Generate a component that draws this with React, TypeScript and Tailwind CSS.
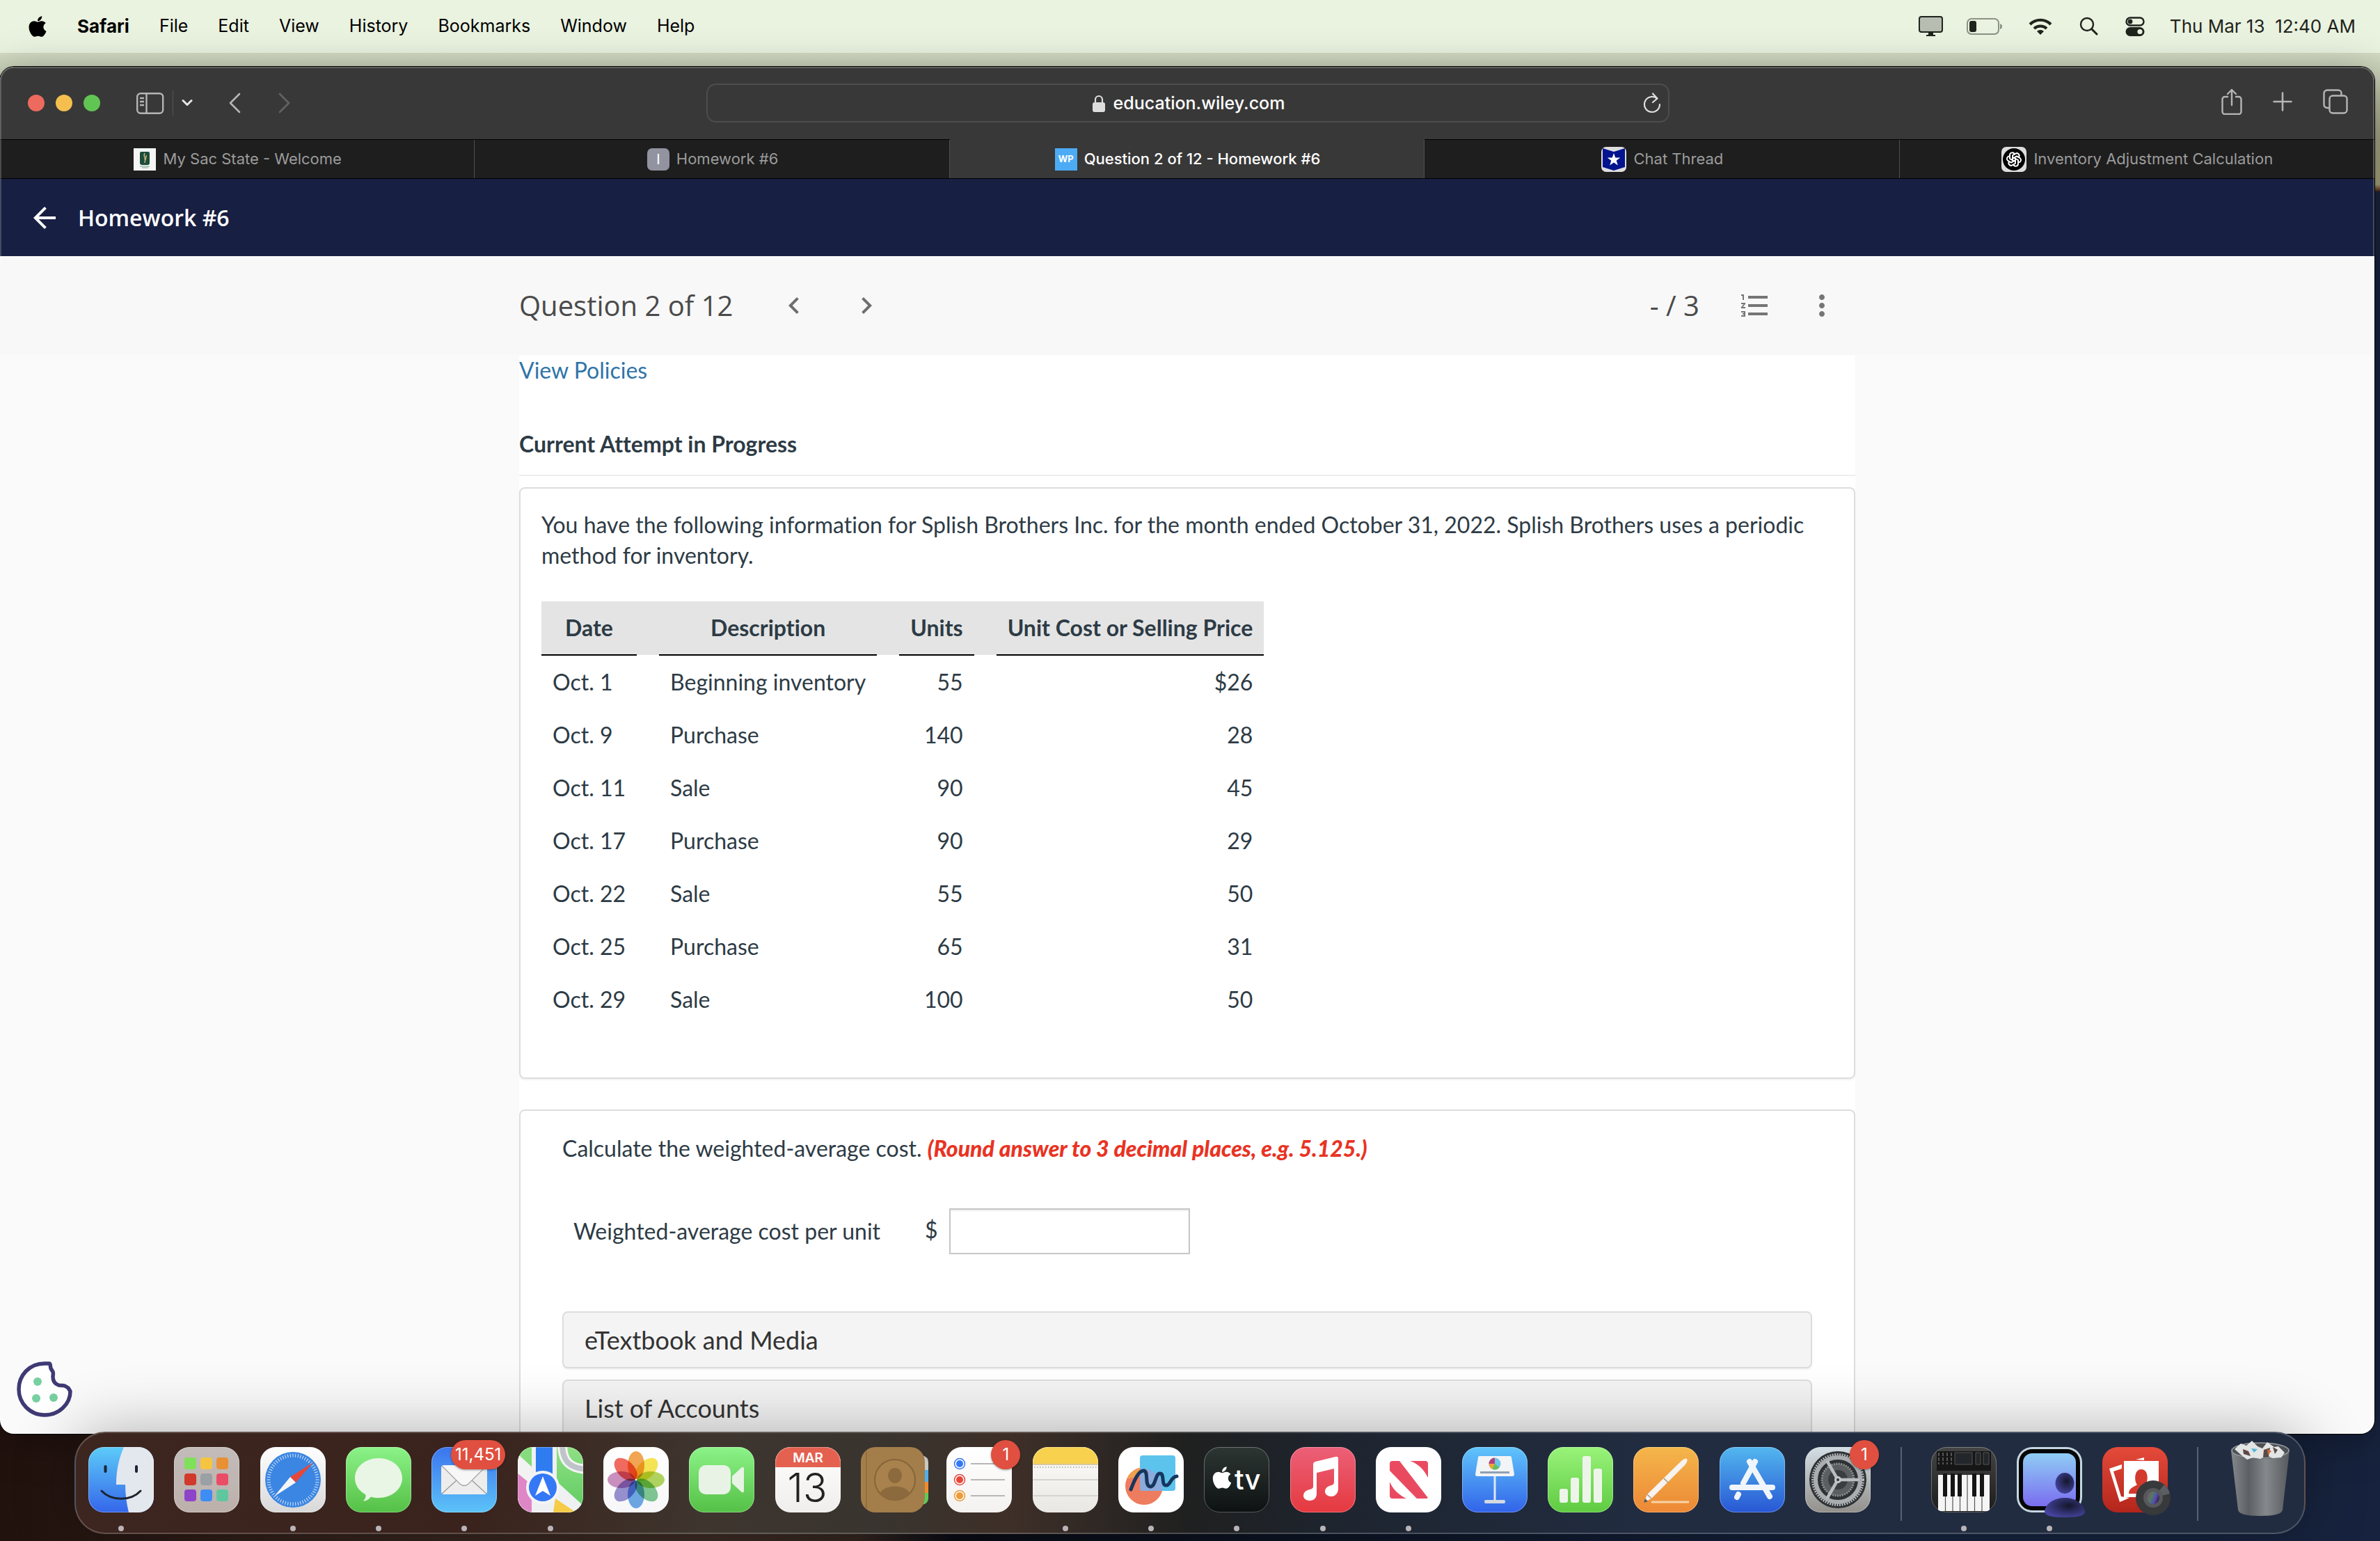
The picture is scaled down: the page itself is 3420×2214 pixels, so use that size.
import { useState } from "react";
import type { ReactNode } from "react";
import { FaApple } from "react-icons/fa";
import { MdArrowBack, MdChevronLeft, MdChevronRight, MdFormatListNumbered, MdMoreVert } from "react-icons/md";
import { TbBrandOpenai } from "react-icons/tb";

type InventoryRow = { date: string; description: string; units: string; price: string };
type DockApp = { name: string; icon: ReactNode; running?: boolean; badge?: string };

const menus = ["File", "Edit", "View", "History", "Bookmarks", "Window", "Help"];

const rows: InventoryRow[] = [
  { date: "Oct. 1", description: "Beginning inventory", units: "55", price: "$26" },
  { date: "Oct. 9", description: "Purchase", units: "140", price: "28" },
  { date: "Oct. 11", description: "Sale", units: "90", price: "45" },
  { date: "Oct. 17", description: "Purchase", units: "90", price: "29" },
  { date: "Oct. 22", description: "Sale", units: "55", price: "50" },
  { date: "Oct. 25", description: "Purchase", units: "65", price: "31" },
  { date: "Oct. 29", description: "Sale", units: "100", price: "50" },
];

export default function App() {
  return (
    <div className="relative flex h-screen flex-col overflow-hidden bg-[#10192b] font-[Inter,sans-serif]">
      <Wallpaper />
      <MenuBar />
      <SafariWindow />
      <Dock />
    </div>
  );
}

function Wallpaper() {
  return (
    <div className="absolute inset-0">
      <div className="absolute inset-0 bg-[linear-gradient(to_right,#22120e_0%,#30201a_12%,#3a2a24_30%,#33251f_36%,#0a0c14_40%,#0c1424_55%,#15233d_80%,#17233e_100%)]" />
      <div className="absolute inset-x-0 top-0 h-[276px] bg-[linear-gradient(to_bottom,#d3dbc4_0px,#d3dbc4_76px,#c8cfb6_110px,#a3a285_200px,#a3a077_265px,#6b4a2b_272px,#1d1a2c_276px)]" />
    </div>
  );
}

function MenuBar() {
  return (
    <header className="relative flex h-[76px] shrink-0 items-center justify-between bg-[#eaf2e0] pl-10 pr-[35px] pb-px text-[25px] text-black">
      <nav aria-label="Menu bar" className="flex items-center gap-[43px]">
        <button aria-label="Apple menu">
          <FaApple className="h-[34px] w-7" />
        </button>
        <button className="text-[26px] font-bold">Safari</button>
        {menus.map((m) => (
          <button key={m}>{m}</button>
        ))}
      </nav>
      <div className="flex items-center text-[#1f241c]">
        <svg className="h-[30px] w-[35px]" viewBox="0 0 35 30">
          <rect x="1" y="1" width="33" height="22" rx="3" fill="#b7bdb0" stroke="#1f241c" strokeWidth="2" />
          <path d="M14 23h7v4h3v2H11v-2h3z" fill="#1f241c" />
        </svg>
        <svg className="ml-[34px] h-[26px] w-[52px]" viewBox="0 0 52 26">
          <rect x="1" y="2" width="45" height="22" rx="6" fill="none" stroke="#8b9285" strokeWidth="2" />
          <rect x="4" y="5" width="10" height="16" rx="3" fill="#1f241c" />
          <path d="M48 9q3 1 3 4t-3 4z" fill="#8b9285" />
        </svg>
        <svg className="ml-[37px] h-[26px] w-[34px]" viewBox="0 0 34 26" fill="none" stroke="#1f241c" strokeWidth="4">
          <path d="M2 10a21 21 0 0 1 30 0" />
          <path d="M8 16a13 13 0 0 1 18 0" />
          <path d="M17 25l-5-5a7 7 0 0 1 10 0z" fill="#1f241c" stroke="none" />
        </svg>
        <svg className="ml-[39px] h-[27px] w-[27px]" viewBox="0 0 27 27" fill="none" stroke="#1f241c" strokeLinecap="round">
          <circle cx="11" cy="11" r="9" strokeWidth="2.4" />
          <path d="M18 18l7 7" strokeWidth="3" />
        </svg>
        <svg className="ml-[39px] h-[28px] w-[28px]" viewBox="0 0 28 28">
          <rect x="1.5" y="1.5" width="25" height="11" rx="5.5" fill="none" stroke="#1f241c" strokeWidth="2.4" />
          <circle cx="7" cy="7" r="3.4" fill="#1f241c" />
          <rect x="0.5" y="15" width="27" height="13" rx="6.5" fill="#1f241c" />
          <circle cx="21" cy="21.5" r="3.6" fill="#eaf2e0" />
        </svg>
        <time className="ml-9 whitespace-pre text-[26px]">Thu Mar 13  12:40 AM</time>
      </div>
    </header>
  );
}

function SafariWindow() {
  return (
    <div className="relative mt-5 mr-2 mb-[154px] flex min-h-0 flex-1 flex-col overflow-hidden rounded-[20px] bg-[#fafafa] shadow-[0_0_0_1px_#000,0_10px_60px_rgba(0,0,0,0.35)]">
      <Toolbar />
      <Tabs />
      <Page />
      <div className="pointer-events-none absolute inset-0 rounded-[20px] border-2 border-white/20" />
    </div>
  );
}

function Toolbar() {
  return (
    <div className="flex h-[104px] shrink-0 items-center bg-[#383838] text-[#b5b5b5]">
      <div className="flex flex-1 items-center pl-10">
        <div className="flex gap-4">
          <button aria-label="Close" className="size-6 rounded-full bg-[#ec6a5e]" />
          <button aria-label="Minimize" className="size-6 rounded-full bg-[#f5bf4f]" />
          <button aria-label="Zoom" className="size-6 rounded-full bg-[#61c554]" />
        </div>
        <button aria-label="Sidebar" className="ml-[52px]">
          <svg className="h-[31px] w-[40px]" viewBox="0 0 40 31" fill="none" stroke="currentColor" strokeWidth="2.4">
            <rect x="1.2" y="1.2" width="37" height="28.6" rx="5" />
            <path d="M14.5 1v29M5 8h6M5 13h6M5 18h6" />
          </svg>
        </button>
        <span className="ml-3 h-9 w-px bg-[#555]" />
        <button aria-label="Tab groups" className="ml-3">
          <svg className="h-[12px] w-[16px]" viewBox="0 0 16 12" fill="none" stroke="#e6e6e6" strokeWidth="3" strokeLinecap="round" strokeLinejoin="round">
            <path d="M2 2.5l6 6 6-6" />
          </svg>
        </button>
        <button aria-label="Back" className="ml-[51px]">
          <svg className="h-[30px] w-[18px]" viewBox="0 0 18 30" fill="none" stroke="currentColor" strokeWidth="2.6" strokeLinecap="round" strokeLinejoin="round">
            <path d="M16 2L3 15l13 13" />
          </svg>
        </button>
        <button aria-label="Forward" className="ml-[54px] text-[#626262]">
          <svg className="h-[30px] w-[18px]" viewBox="0 0 18 30" fill="none" stroke="currentColor" strokeWidth="2.6" strokeLinecap="round" strokeLinejoin="round">
            <path d="M2 2l13 13L2 28" />
          </svg>
        </button>
      </div>

      <div className="flex h-14 w-[1384px] items-center justify-between rounded-[14px] border-2 border-[#4d4d4d] px-[10px]">
        <span className="w-5" />
        <span className="flex items-center gap-3 pt-px pl-2 text-[25px] font-medium text-white">
          <svg className="h-[26px] w-[18px]" viewBox="0 0 18 26">
            <rect x="0" y="11" width="18" height="14" rx="3" fill="#dedede" />
            <path d="M4 12V7a5 5 0 0 1 10 0v5" fill="none" stroke="#dedede" strokeWidth="2.2" />
          </svg>
          education.wiley.com
        </span>
        <button aria-label="Reload">
          <svg className="h-[30px] w-[26px]" viewBox="0 0 26 30" fill="none" stroke="#dedede" strokeWidth="2.2" strokeLinecap="round" strokeLinejoin="round">
            <path d="M20 8.5A11 11 0 1 0 24 17" />
            <path d="M14 1.5l6.5 7-6.5 5.5" />
          </svg>
        </button>
      </div>

      <div className="flex flex-1 items-center justify-end gap-11 pr-[38px] pb-1">
        <button aria-label="Share">
          <svg className="h-[38px] w-[30px]" viewBox="0 0 30 38" fill="none" stroke="currentColor" strokeWidth="2.4" strokeLinecap="round" strokeLinejoin="round">
            <path d="M9 12H5a3.5 3.5 0 0 0-3.5 3.5v18A3.5 3.5 0 0 0 5 37h20a3.5 3.5 0 0 0 3.5-3.5v-18A3.5 3.5 0 0 0 25 12h-4M15 24V2M9 8l6-6 6 6" />
          </svg>
        </button>
        <button aria-label="New tab">
          <svg className="h-[28px] w-[28px]" viewBox="0 0 28 28" stroke="currentColor" strokeWidth="2.6" strokeLinecap="round">
            <path d="M14 1.5v25M1.5 14h25" />
          </svg>
        </button>
        <button aria-label="Tab overview">
          <svg className="h-[36px] w-[36px]" viewBox="0 0 36 36" fill="none" stroke="currentColor" strokeWidth="2.4">
            <path d="M9 27H6a4.5 4.5 0 0 1-4.5-4.5V6A4.5 4.5 0 0 1 6 1.5h16A4.5 4.5 0 0 1 26.5 6v3" />
            <rect x="9.5" y="9.5" width="25" height="25" rx="4.5" />
          </svg>
        </button>
      </div>
    </div>
  );
}

function Tabs() {
  return (
    <div role="tablist" className="grid h-[57px] shrink-0 grid-cols-5 bg-[#1e1e1e] text-[22px] text-[#9b9b9b]">
      <Tab title="My Sac State - Welcome">
        <svg className="size-8" viewBox="0 0 32 32">
          <path d="M0 0h32v32H0z" fill="#f4f6f5" />
          <path d="M9 7q0-2 2-2h10q2 0 2 2v14q0 3-3 3h-8q-3 0-3-3z" fill="#1d4d3a" />
          <path d="M16 7c-3 5 2 6 0 10M18 10c1 4-2 6-2 11" stroke="#c9b57c" strokeWidth="1.5" fill="none" />
          <path d="M9 26h14M12 28h9" stroke="#7fa294" strokeWidth="1.2" />
        </svg>
      </Tab>
      <Tab title="Homework #6">
        <span className="flex size-8 items-center justify-center rounded-[7px] bg-[#9293a0] text-[20px] text-white">I</span>
      </Tab>
      <Tab title="Question 2 of 12 - Homework #6" active>
        <span className="flex size-8 items-center justify-center bg-[#4dabf5] text-[13px] font-bold text-white">WP</span>
      </Tab>
      <Tab title="Chat Thread">
        <svg className="size-9" viewBox="0 0 36 36">
          <rect width="36" height="36" rx="7" fill="#dedede" />
          <path d="M2 2l16 5 16-5v27l-16 5-16-5z" fill="#04148f" />
          <path d="M18 9l2.300 6.600h7l-5.600 4.200 2.100 6.700-5.800-4-5.800 4 2.100-6.700-5.600-4.200h7z" fill="#fff" />
        </svg>
      </Tab>
      <Tab title="Inventory Adjustment Calculation">
        <span className="flex size-9 items-center justify-center rounded-[7px] bg-[#dedede]">
          <span className="flex size-8 items-center justify-center rounded-full bg-black">
            <TbBrandOpenai className="size-6 text-white" />
          </span>
        </span>
      </Tab>
    </div>
  );
}

function Tab({ title, active, children }: { title: string; active?: boolean; children: ReactNode }) {
  const cls = active
    ? "border-b border-t border-t-[#383838] border-b-black bg-[#383838] text-white font-medium"
    : "border-y border-black";

  return (
    <button role="tab" aria-selected={!!active} className={`flex ${cls}`}>
      <span className="flex h-full flex-1 items-center justify-center gap-[10px] pl-[2px]">
        {children}
        <span>{title}</span>
      </span>
      <span className="h-full w-px bg-[#4f4f4f]" />
    </button>
  );
}

function Page() {
  return (
    <div className="flex min-h-0 flex-1 flex-col">
      <div className="flex h-[111px] shrink-0 items-center gap-6 bg-[#171f42] pl-10 text-white">
        <a href="#assignments" aria-label="Back to assignments">
          <MdArrowBack className="size-12" />
        </a>
        <h1 className="font-['Open_Sans',sans-serif] text-[32px] font-semibold">Homework #6</h1>
      </div>

      <div className="flex h-[142px] shrink-0 items-center justify-center bg-[#f8f8f8]">
        <div className="flex w-[1920px] items-center font-['Open_Sans',sans-serif] text-[40px] text-[#4a4a4a]">
          <h2>Question 2 of 12</h2>
          <button aria-label="Previous question" className="ml-16 text-[#6e6e6e]">
            <MdChevronLeft className="size-12" />
          </button>
          <button aria-label="Next question" className="ml-14 text-[#6e6e6e]">
            <MdChevronRight className="size-12" />
          </button>
          <span className="ml-auto">- / 3</span>
          <button aria-label="Question list" className="ml-14 text-[#757575]">
            <MdFormatListNumbered className="size-12" />
          </button>
          <button aria-label="More options" className="ml-12 mr-6 text-[#757575]">
            <MdMoreVert className="size-12" />
          </button>
        </div>
      </div>

      <div className="relative flex min-h-0 flex-1 justify-center overflow-hidden">
        <main className="w-[1920px] bg-white font-[Lato,sans-serif] text-[32px] leading-[44px] text-[#2d3b45] [font-variant-ligatures:none]">
          <a href="#policies" className="block text-[#2f74a8]">
            View Policies
          </a>
          <h3 className="mt-[62px] font-bold">Current Attempt in Progress</h3>
          <hr className="mt-[22px] mb-4 border-t-2 border-[#eee]" />
          <Question />
          <Answer />
        </main>
        <CookieButton />
      </div>
    </div>
  );
}

function Question() {
  return (
    <section className="rounded-lg border-2 border-[#ddd] px-[30px] pt-[30px] pb-[74px] shadow-[0_2px_2px_rgba(0,0,0,0.05)]">
      <p>
        You have the following information for Splish Brothers Inc. for the month ended October 31, 2022. Splish
        Brothers uses a periodic method for inventory.
      </p>
      <table className="mt-11 border-collapse">
        <thead>
          <tr className="bg-[#e4e4e4]">
            <HeadCell>Date</HeadCell>
            <td className="w-8 min-w-8" />
            <HeadCell>Description</HeadCell>
            <td className="w-8 min-w-8" />
            <HeadCell>Units</HeadCell>
            <td className="w-8 min-w-8" />
            <HeadCell>Unit Cost or Selling Price</HeadCell>
          </tr>
        </thead>
        <tbody>
          {rows.map((r) => (
            <tr key={r.date}>
              <td className="p-4">{r.date}</td>
              <td />
              <td className="p-4">{r.description}</td>
              <td />
              <td className="p-4 text-right">{r.units}</td>
              <td />
              <td className="p-4 text-right">{r.price}</td>
            </tr>
          ))}
        </tbody>
      </table>
    </section>
  );
}

function HeadCell({ children }: { children: ReactNode }) {
  return (
    <th scope="col" className="border-b-2 border-black p-4 text-center font-bold">
      {children}
    </th>
  );
}

function Answer() {
  const [cost, setCost] = useState("");

  return (
    <section className="mt-11 rounded-lg border-2 border-[#ddd] px-[60px] pt-8 pb-10">
      <p>
        Calculate the weighted-average cost.{" "}
        <strong className="font-black text-[#e93323] italic">(Round answer to 3 decimal places, e.g. 5.125.)</strong>
      </p>
      <div className="mt-16 flex items-center pl-4">
        <label htmlFor="cost">Weighted-average cost per unit</label>
        <span className="ml-16 pb-1">$</span>
        <input
          id="cost"
          value={cost}
          onChange={(e) => setCost(e.target.value)}
          className="ml-4 h-[66px] w-[346px] border-2 border-[#c7c7c7] px-3 text-right shadow-[inset_0_2px_2px_rgba(0,0,0,0.07)] outline-none"
        />
      </div>
      <div className="mt-[82px] space-y-4">
        <Panel title="eTextbook and Media" />
        <Panel title="List of Accounts" />
      </div>
    </section>
  );
}

function Panel({ title }: { title: string }) {
  return (
    <button className="flex h-[82px] w-full items-center rounded-lg border-2 border-[#ddd] bg-[#f4f4f4] px-[30px] text-[36px] text-[#333] shadow-[0_2px_2px_rgba(0,0,0,0.05)]">
      {title}
    </button>
  );
}

function CookieButton() {
  return (
    <button aria-label="Cookie settings" className="absolute bottom-6 left-6">
      <svg className="size-20" viewBox="0 0 80 80">
        <path
          d="M40 3C18 3 3 20 3 40s16 37 37 37 37-16 37-34l-3-5-5-3c-3-1-7 0-9-1-6-2-8-6-8-12 0-3 1-4 0-7l-3-5c-1-3 0-6-2-7z"
          fill="#fff"
          stroke="#3f3a74"
          strokeWidth="5.5"
          strokeLinejoin="round"
        />
        <circle cx="30" cy="29" r="6" fill="#78cfa1" />
        <circle cx="28" cy="53" r="6" fill="#78cfa1" />
        <circle cx="53" cy="52" r="6" fill="#78cfa1" />
      </svg>
    </button>
  );
}

function Dock() {
  return (
    <div className="absolute inset-x-[107px] bottom-[10px] flex rounded-[44px] border-2 border-white/20 bg-[linear-gradient(to_right,#3d2620_0%,#3a231d_18%,#3e352e_28%,#39342f_36%,#3e2f28_42%,#1f2020_50%,#1e2530_57%,#212c40_70%,#222c40_100%)] pt-5 pr-4 pb-[2px] pl-[18px] shadow-[0_0_90px_rgba(0,0,0,0.3)]">
      <div className="flex flex-1 justify-between">
        {apps.map((a) => (
          <DockItem key={a.name} app={a} />
        ))}
      </div>
      <span className="mr-[42px] ml-[43px] h-[106px] w-[2px] bg-white/25" />
      <div className="flex gap-[29px]">
        {recents.map((a) => (
          <DockItem key={a.name} app={a} />
        ))}
      </div>
      <span className="mx-[42px] h-[106px] w-[2px] bg-white/25" />
      <DockItem app={{ name: "Trash", icon: <TrashIcon /> }} />
    </div>
  );
}

function DockItem({ app }: { app: DockApp }) {
  return (
    <button aria-label={app.name} className="relative flex w-[94px] flex-col items-center">
      {app.icon}
      <span className={`mt-[19px] size-2 rounded-full ${app.running ? "bg-[#b9b4b8]" : ""}`} />
      {app.badge && (
        <span className="absolute -top-[10px] -right-3 flex h-[42px] min-w-[42px] items-center justify-center rounded-full bg-[#e04f3f] px-[6px] text-[24px] text-white shadow-[0_1px_3px_rgba(0,0,0,0.4)]">
          {app.badge}
        </span>
      )}
    </button>
  );
}

function Icon({ id, from, to, children }: { id: string; from: string; to: string; children?: ReactNode }) {
  return (
    <svg className="size-[94px] overflow-visible" viewBox="0 0 94 94">
      <defs>
        <linearGradient id={id} x1="0" y1="0" x2="0" y2="1">
          <stop offset="0" stopColor={from} />
          <stop offset="1" stopColor={to} />
        </linearGradient>
        <clipPath id={`${id}-clip`}>
          <rect width="94" height="94" rx="22" />
        </clipPath>
      </defs>
      <g clipPath={`url(#${id}-clip)`}>
        <path d="M0 0h94v94H0z" fill={`url(#${id})`} />
        {children}
      </g>
      <rect x="0.5" y="0.5" width="93" height="93" rx="22" fill="none" stroke="#fff" strokeOpacity="0.3" />
    </svg>
  );
}

const pads = [
  ["#7fe05a", "#f5c542", "#ea9034"],
  ["#d0392b", "#9aa0a3", "#ea4d66"],
  ["#8e44c8", "#3d8df5", "#5fc7a0"],
];

const petals = ["#f19a3a", "#f5e23f", "#a9d04a", "#6fc284", "#5b9fe4", "#8c84cc", "#c583b8", "#f0564a"];

const spin = (count: number) => Array.from({ length: count }, (_, i) => (i * 360) / count);

const apps: DockApp[] = [
  {
    name: "Finder",
    running: true,
    icon: (
      <Icon id="finder" from="#5ccbf8" to="#3566ea">
        <path d="M51 0C43 18 40 36 40 54h13c0 14 2 28 5 40h36V0z" fill="#e3e7ee" />
        <path d="M24.5 28v7M69 28v7" stroke="#1b2430" strokeWidth="4" strokeLinecap="round" />
        <path d="M19 63c14 15 42 15 56 0" stroke="#1b2430" strokeWidth="3" fill="none" strokeLinecap="round" />
      </Icon>
    ),
  },
  {
    name: "Launchpad",
    icon: (
      <Icon id="launchpad" from="#c2bcba" to="#bdb0ab">
        {pads.map((line, y) =>
          line.map((c, x) => <rect key={c} x={15 + x * 23} y={15 + y * 23} width="17" height="17" rx="4" fill={c} />),
        )}
      </Icon>
    ),
  },
  {
    name: "Safari",
    running: true,
    icon: (
      <Icon id="safari" from="#ffffff" to="#d8d8d8">
        <circle cx="47" cy="47" r="40" fill="#3b86e2" />
        {spin(60).map((a) => (
          <path key={a} d="M47 9.5v5" stroke="#fff" strokeOpacity="0.8" transform={`rotate(${a} 47 47)`} />
        ))}
        <path d="M76 22L43 43l8 8z" fill="#e5483b" />
        <path d="M20 71l23-28 8 8z" fill="#f4f6f8" />
      </Icon>
    ),
  },
  {
    name: "Messages",
    running: true,
    icon: (
      <Icon id="messages" from="#8bf388" to="#55c046">
        <path d="M47 16c19 0 34 12.5 34 28.5S66 73 47 73c-4 0-8-.5-11-1.5-3 4-7 6-11 6 3-3 4-6 3.5-9C19 63 13 55 13 44.500 13 28.500 28 16 47 16z" fill="#e9f6e6" />
      </Icon>
    ),
  },
  {
    name: "Mail",
    running: true,
    badge: "11,451",
    icon: (
      <Icon id="mail" from="#3b74ee" to="#5cc3f8">
        <rect x="14" y="26" width="66" height="42" rx="4" fill="#ededed" />
        <path d="M15 67l23-21M79 67L56 46" stroke="#9a9a9a" strokeWidth="1.3" />
        <path d="M15 27l26 26q6 5 12 0l26-26" fill="#f7f7f7" stroke="#a5a5a5" strokeWidth="1.3" />
      </Icon>
    ),
  },
  {
    name: "Maps",
    running: true,
    icon: (
      <Icon id="maps" from="#8fe084" to="#5fcb60">
        <path d="M0 10l24 22v62H0z" fill="#f2f2f2" />
        <path d="M0 0h20v22L0 8z" fill="#86dc7c" />
        <path d="M0 38l22 18v38H0z" fill="#df86c6" />
        <path d="M20 0h36v94H20z" fill="#eef0f2" />
        <path d="M26 0h24v44H26z" fill="#2f7cf0" />
        <path d="M50 44l44 40v10H22V70z" fill="#eef0f2" />
        <path d="M54 74l30 20H51z" fill="#f6cb45" />
        <path d="M64 -4c0 24 10 34 34 36" fill="none" stroke="#f4f4f4" strokeWidth="14" />
        <path d="M64 -4c0 24 10 34 34 36" fill="none" stroke="#bfc4ca" strokeWidth="8" />
        <circle cx="36" cy="58" r="24" fill="#f3f4f6" />
        <circle cx="36" cy="58" r="20" fill="#3478f6" />
        <path d="M36 42l11 28-11-7-11 7z" fill="#fff" />
      </Icon>
    ),
  },
  {
    name: "Photos",
    icon: (
      <Icon id="photos" from="#ffffff" to="#f7f7f9">
        {spin(8).map((a, i) => (
          <ellipse key={a} cx="47" cy="26" rx="12" ry="20" fill={petals[i]} fillOpacity="0.88" className="mix-blend-multiply" transform={`rotate(${a} 47 47)`} />
        ))}
      </Icon>
    ),
  },
  {
    name: "FaceTime",
    icon: (
      <Icon id="facetime" from="#8bf388" to="#55c046">
        <rect x="14" y="26" width="46" height="42" rx="10" fill="#e8f3e6" />
        <path d="M62 42l14-13q3-1 3 2v32q0 3-3 2L62 52z" fill="#e8f3e6" />
      </Icon>
    ),
  },
  {
    name: "Calendar",
    icon: (
      <Icon id="calendar" from="#fefefe" to="#f0eeec">
        <path d="M0 0h94v29H0z" fill="#e4604f" />
        <text x="47" y="22" textAnchor="middle" fontSize="19" fontWeight="600" fill="#fff">
          MAR
        </text>
        <text x="46" y="79" textAnchor="middle" fontSize="57" fontWeight="300" fill="#222">
          13
        </text>
      </Icon>
    ),
  },
  {
    name: "Contacts",
    icon: (
      <svg className="size-[94px] overflow-visible" viewBox="0 0 94 94">
        <path d="M88 12q9 2 9 10v11h-9z" fill="#c9c9c4" />
        <path d="M88 33h9v17h-9z" fill="#4eb0ee" />
        <path d="M88 50h9v16h-9z" fill="#f08c2e" />
        <path d="M88 66h9v8q0 7-9 9z" fill="#5ecb58" />
        <rect width="92" height="94" rx="21" fill="#a47e4a" />
        <path d="M8 6v82" stroke="#8d6a3b" strokeWidth="1.5" />
        <circle cx="49" cy="47" r="29" fill="#a8814c" stroke="#86653a" strokeWidth="2" />
        <ellipse cx="49" cy="41" rx="10" ry="11" fill="#8d6a3d" />
        <path d="M28 67c3-14 39-14 42 0-11 12-31 12-42 0z" fill="#8d6a3d" />
      </svg>
    ),
  },
  {
    name: "Reminders",
    badge: "1",
    icon: (
      <Icon id="reminders" from="#ffffff" to="#f3f2f0">
        {["#3478f6", "#e8463a", "#ef9a37"].map((c, i) => (
          <g key={c}>
            <circle cx="19" cy={24 + i * 23} r="7.5" fill="none" stroke={c} strokeWidth="1.5" />
            <circle cx="19" cy={24 + i * 23} r="5" fill={c} />
            <path d={`M35 ${24 + i * 23}h49`} stroke="#b7b7b7" strokeWidth="2" />
          </g>
        ))}
      </Icon>
    ),
  },
  {
    name: "Notes",
    running: true,
    icon: (
      <Icon id="notes" from="#fdfdfb" to="#e9e7e2">
        <path d="M0 0h94v24H0z" fill="#f8d14e" />
        <path d="M0 25h94" stroke="#b59a4e" strokeWidth="1" />
        <path d="M2 29h92" stroke="#b9b6ad" strokeWidth="2" strokeDasharray="1.5 2.5" />
        <path d="M0 47h94M0 70h94" stroke="#d6d4cf" strokeWidth="2" />
      </Icon>
    ),
  },
  {
    name: "Freeform",
    running: true,
    icon: (
      <Icon id="freeform" from="#ffffff" to="#ffffff">
        <circle cx="37" cy="56" r="27" fill="#ee7c5e" />
        <path d="M12 46a27 27 0 0 1 20-16l-4 12z" fill="#f2a04c" />
        <rect x="31" y="12" width="51" height="51" rx="4" fill="#5cc3ec" />
        <path d="M31 30q32 2 32 33H35q-4 0-4-4z" fill="#8cabdc" />
        <path d="M18 61c6-16 12-28 19-27 7 2 0 22 9 23 8 0 7-20 14-19 7 0 1 18 9 17 6 0 6-12 15-13" fill="none" stroke="#16365e" strokeWidth="5" strokeLinecap="round" />
      </Icon>
    ),
  },
  {
    name: "TV",
    running: true,
    icon: (
      <Icon id="tv" from="#2d3633" to="#0d1112">
        <FaApple x="8" y="26" size={36} color="#fff" />
        <text x="44" y="61" fontSize="40" fontWeight="500" fill="#fff">
          tv
        </text>
      </Icon>
    ),
  },
  {
    name: "Music",
    running: true,
    icon: (
      <Icon id="music" from="#ec6078" to="#e5393f">
        <path d="M33 25q0-3 3-4l29-7q4-1 4 3v43c0 6-4 11-10 11-5 0-9-3-9-7 0-5 4-8 9-9 3-1 4-2 4-5V31l-25 6v30c0 6-4 10-10 10-5 0-9-3-9-7 0-5 4-8 9-9 4-1 5-2 5-5z" fill="#fff" />
      </Icon>
    ),
  },
  {
    name: "News",
    running: true,
    icon: (
      <Icon id="news" from="#ffffff" to="#ffffff">
        <path d="M24 20h10l41 53q-1 1-3 1H59L20 34V24q0-4 4-4z" fill="#ea4a60" />
        <path d="M49 20h22q4 0 4 4v20C70 34 62 24 49 20zM20 50v20q0 4 4 4h20C33 69 24 60 20 50z" fill="#ea4a60" />
      </Icon>
    ),
  },
  {
    name: "Keynote",
    icon: (
      <Icon id="keynote" from="#60c5fb" to="#3163e9">
        <path d="M45.5 40h3v38h-3z" fill="#dfe6ef" />
        <rect x="32" y="76" width="30" height="5" rx="2" fill="#d5d9e0" />
        <path d="M25 13h44q2 0 2 2l4 24q0 3-3 3H22q-3 0-3-3l4-24q0-2 2-2z" fill="#f3f4f6" />
        <path d="M26 35h42v3H26z" fill="#8fa0b4" />
        <circle cx="47" cy="24" r="8.5" fill="#6cc6ee" />
        <path d="M47 24v-8.5a8.5 8.5 0 0 0-8.5 8.5z" fill="#b5407c" />
        <path d="M47 24h-8.5a8.5 8.5 0 0 0 5 7.7z" fill="#f0a33c" />
        <path d="M47 24l-3.5 7.7a8.5 8.5 0 0 0 10-2.5z" fill="#67bf5d" />
      </Icon>
    ),
  },
  {
    name: "Numbers",
    icon: (
      <Icon id="numbers" from="#99f37a" to="#5fcb41">
        <rect x="17" y="60" width="12" height="20" rx="3" fill="#edf5ea" />
        <rect x="33" y="44" width="12" height="36" rx="3" fill="#edf5ea" />
        <rect x="50" y="13" width="12" height="67" rx="3" fill="#edf5ea" />
        <rect x="66" y="31" width="12" height="49" rx="3" fill="#edf5ea" />
      </Icon>
    ),
  },
  {
    name: "Pages",
    icon: (
      <Icon id="pages" from="#f5b64b" to="#ec8835">
        <path d="M26 79h54" stroke="#f8d3a5" strokeWidth="3" />
        <path d="M15 80l5-12L69 20q6-5 8-3 2 3-3 9L26 74z" fill="#f6f3f0" />
        <path d="M20 68l6 6M44 45l6 6" stroke="#a99680" strokeWidth="1.5" />
        <path d="M15 80l2-6 4 4z" fill="#555" />
      </Icon>
    ),
  },
  {
    name: "App Store",
    icon: (
      <Icon id="appstore" from="#53b7ef" to="#2857d4">
        <g stroke="#f0f5fc" strokeWidth="8" strokeLinecap="round">
          <path d="M18 58h58" />
          <path d="M51 21L34 52M27 68l-2 4" />
          <path d="M43 21l29 50" />
        </g>
      </Icon>
    ),
  },
  {
    name: "System Settings",
    badge: "1",
    icon: (
      <Icon id="settings" from="#d3dee5" to="#93908b">
        <circle cx="47" cy="47" r="41" fill="#2f3234" />
        <circle cx="47" cy="47" r="36" fill="none" stroke="#b4b8ba" strokeWidth="4" strokeDasharray="2 1.5" />
        <circle cx="47" cy="47" r="32" fill="none" stroke="#a9adaf" strokeWidth="6" />
        <circle cx="47" cy="47" r="23" fill="#5c5f61" stroke="#8d9193" strokeWidth="3" strokeDasharray="2 1.5" />
        <circle cx="47" cy="47" r="14" fill="#3b3e40" />
        {[90, 210, 330].map((a) => (
          <path key={a} d="M47 47V16" stroke="#b9bdbf" strokeWidth="4.5" transform={`rotate(${a} 47 47)`} />
        ))}
        <circle cx="47" cy="47" r="5" fill="#c4c8ca" />
        <circle cx="47" cy="47" r="2" fill="#333" />
      </Icon>
    ),
  },
];

const recents: DockApp[] = [
  {
    name: "MainStage",
    running: true,
    icon: (
      <Icon id="keys" from="#454545" to="#1c1c1c">
        <path d="M8 6h78v28H8z" fill="#161616" />
        {[9, 15, 21, 27].map((x) => (
          <path key={x} d={`M${x + 2} 8v17`} stroke="#555" strokeWidth="2" strokeDasharray="5 2" />
        ))}
        <path d="M34 8h25v17H34zM64 8h7v17h-7zM75 8h8v17h-8z" fill="#23272b" stroke="#555" />
        <path d="M10 40h74v52H10z" fill="#f5f5f5" />
        <path d="M20.5 40v52M31 40v52M41.5 40v52M52 40v52M62.5 40v52M73 40v52" stroke="#555" strokeWidth="1.2" />
        <path d="M17 38h6v33h-6zM28 38h6v33h-6zM38 38h6v33h-6zM59 38h6v33h-6zM70 38h6v33h-6z" fill="#151515" />
      </Icon>
    ),
  },
  {
    name: "Screen Mirroring",
    running: true,
    icon: (
      <svg className="size-[94px] overflow-visible" viewBox="0 0 94 94">
        <defs>
          <linearGradient id="screen" x1="0" y1="0" x2="0" y2="1">
            <stop offset="0" stopColor="#8fcdf5" />
            <stop offset="1" stopColor="#7a6df0" />
          </linearGradient>
          <radialGradient id="person" cx="0.6" cy="0.4" r="0.65">
            <stop offset="0" stopColor="#15172a" />
            <stop offset="1" stopColor="#4544a0" />
          </radialGradient>
        </defs>
        <rect width="94" height="94" rx="22" fill="#c4d6e2" />
        <rect x="3" y="3" width="88" height="88" rx="19" fill="#060606" />
        <rect x="9" y="9" width="76" height="76" rx="13" fill="url(#screen)" />
        <ellipse cx="69" cy="52" rx="13.5" ry="15" fill="url(#person)" />
        <path d="M40 93c1-12 14-20 29-20s27 8 29 20c0 5-8 8-29 8s-29-3-29-8z" fill="url(#person)" />
      </svg>
    ),
  },
  {
    name: "Photo Booth",
    icon: (
      <svg className="size-[94px] overflow-visible" viewBox="0 0 94 94">
        <defs>
          <linearGradient id="booth" x1="0" y1="0" x2="0" y2="1">
            <stop offset="0" stopColor="#e54a3a" />
            <stop offset="1" stopColor="#b3251b" />
          </linearGradient>
          <linearGradient id="lens" x1="0" y1="0.2" x2="1" y2="0.6">
            <stop offset="0" stopColor="#8a4a68" />
            <stop offset="0.4" stopColor="#4c7d62" />
            <stop offset="0.7" stopColor="#5a4bb0" />
            <stop offset="1" stopColor="#2a2440" />
          </linearGradient>
        </defs>
        <rect width="94" height="94" rx="22" fill="url(#booth)" />
        <path d="M48 18l12-3v4z" fill="#fff" />
        <path d="M10 31l18-6v6l-12 4 11 36 12 2-14 6z" fill="#fff" />
        <path d="M31 20h50v52H31z" fill="#fff" />
        <path d="M38 67c0-9 9-10 12-13-4-4-5-22 6-22s10 18 6 22c3 3 12 4 12 13z" fill="#d33a2d" />
        <circle cx="73" cy="73" r="25" fill="#38393b" />
        <path d="M73 73l16-19a25 25 0 0 1 8 13z" fill="#5c5e61" />
        <circle cx="73" cy="73" r="14" fill="#57585c" />
        <circle cx="73" cy="73" r="9" fill="url(#lens)" />
      </svg>
    ),
  },
];

function TrashIcon() {
  return (
    <svg className="size-[94px] overflow-visible" viewBox="0 0 94 94">
      <defs>
        <linearGradient id="trash" x1="0" y1="0" x2="1" y2="0">
          <stop offset="0" stopColor="#85898c" />
          <stop offset="0.3" stopColor="#5c6064" />
          <stop offset="0.6" stopColor="#85898c" />
          <stop offset="1" stopColor="#55595d" />
        </linearGradient>
      </defs>
      <path d="M5 5l10 85q1 9 32 9t32-9L89 5q-6 12-42 12T5 5z" fill="url(#trash)" />
      <ellipse cx="47" cy="5" rx="41" ry="11" fill="#4d5155" stroke="#9ba0a4" strokeWidth="1.5" />
      <path d="M10 3l9-8 8 3 8-7 8 8 7 3 7-9 10 7 6-1 9 9-5 7-12 1-9-4-9 5-10-2-9 3-9-7z" fill="#e3e4e4" />
      <path d="M22 3l8 3 3 7-10-3zM52 4l9-3-2 12-8 2zM65 0l7 4-4 6z" fill="#5c4a48" />
      <path d="M34 2l9 1-5 5z" fill="#54b6d8" />
      <path d="M57 3l6 3-5 5z" fill="#cc6b36" />
    </svg>
  );
}
